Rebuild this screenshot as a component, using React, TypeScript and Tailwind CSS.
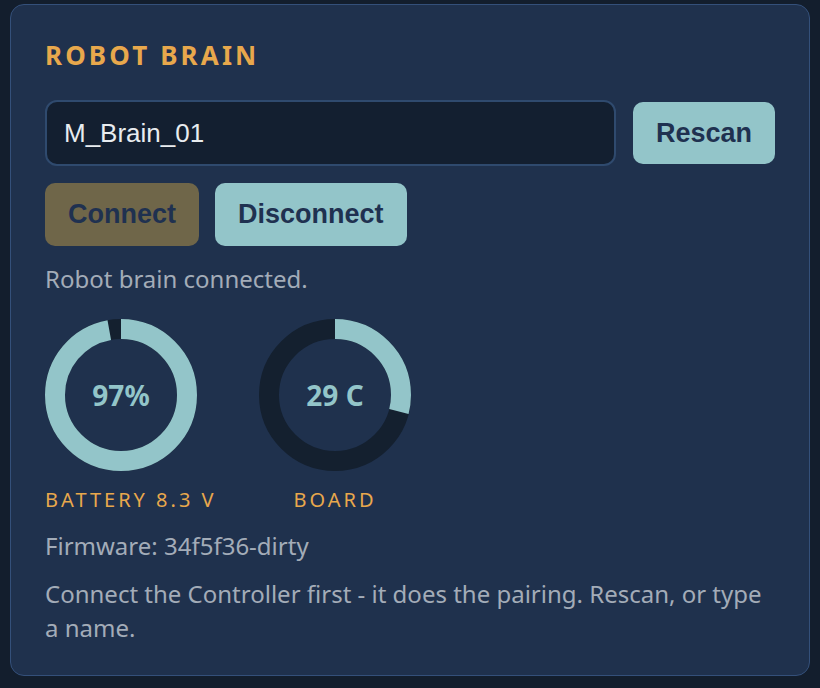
import React, { useState } from 'react';

const Gauge = ({ value, text, label }: { value: number; text: string; label: string }) => {
  const r = 66;
  const c = 2 * Math.PI * r;
  return (
    <div className="w-[152px] flex flex-col">
      <div className="relative w-[152px] h-[152px]">
        <svg width="152" height="152" viewBox="0 0 152 152" className="block">
          <circle cx="76" cy="76" r={r} fill="none" stroke="#14202f" strokeWidth="20" />
          <circle
            cx="76"
            cy="76"
            r={r}
            fill="none"
            stroke="#93c5c9"
            strokeWidth="20"
            strokeDasharray={`${(c * value) / 100} ${c}`}
            transform="rotate(-90 76 76)"
          />
        </svg>
        <div className="absolute inset-0 flex items-center justify-center text-[28px] font-bold text-[#93c5c9]">
          {text}
        </div>
      </div>
      <div className="mt-[17px] text-center text-[20px] leading-[24px] tracking-[0.15em] text-[#e8a84c] whitespace-nowrap">
        {label}
      </div>
    </div>
  );
};

export default function App() {
  const [name, setName] = useState('M_Brain_01');

  return (
    <div className="min-h-screen bg-[#131e2d] px-[10px] pt-[4px] pb-[12px] font-['Noto_Sans',sans-serif]">
      <div className="rounded-[14px] border border-[#34507a] bg-[#1f314d] px-[34px] pt-[34px] pb-[30px]">
        <h2 className="text-[26px] leading-[32px] font-bold tracking-[0.12em] text-[#e8a84c] mb-[29px]">
          ROBOT BRAIN
        </h2>

        <div className="flex items-center gap-[17px]">
          <input
            value={name}
            onChange={(e) => setName(e.target.value)}
            className="flex-1 h-[66px] rounded-[12px] border-2 border-[#2f4a6e] bg-[#131f30] px-[17px] text-[26px] text-[#e8ecef] font-['Liberation_Sans',Arial,sans-serif] outline-none"
          />
          <button className="h-[62px] px-[23px] rounded-[10px] bg-[#93c5c9] text-[#1f3150] text-[27px] font-bold font-['Liberation_Sans',Arial,sans-serif]">
            Rescan
          </button>
        </div>

        <div className="flex gap-[16px] mt-[17px]">
          <button
            disabled
            className="h-[63px] px-[23px] rounded-[10px] bg-[#6f6649] text-[#1f3150] text-[27px] font-bold font-['Liberation_Sans',Arial,sans-serif]"
          >
            Connect
          </button>
          <button className="h-[63px] px-[23px] rounded-[10px] bg-[#93c5c9] text-[#1f3150] text-[27px] font-bold font-['Liberation_Sans',Arial,sans-serif]">
            Disconnect
          </button>
        </div>

        <p className="mt-[16px] text-[24px] leading-[34px] text-[#a3acb8]">Robot brain connected.</p>

        <div className="flex gap-[62px] mt-[23px]">
          <Gauge value={97} text="97%" label="BATTERY 8.3 V" />
          <Gauge value={29} text="29 C" label="BOARD" />
        </div>

        <p className="mt-[17px] text-[24px] leading-[34px] text-[#a3acb8]">Firmware: 34f5f36-dirty</p>
        <p className="mt-[14px] text-[24px] leading-[34px] text-[#a3acb8]">
          Connect the Controller first - it does the pairing. Rescan, or type a name.
        </p>
      </div>
    </div>
  );
}
